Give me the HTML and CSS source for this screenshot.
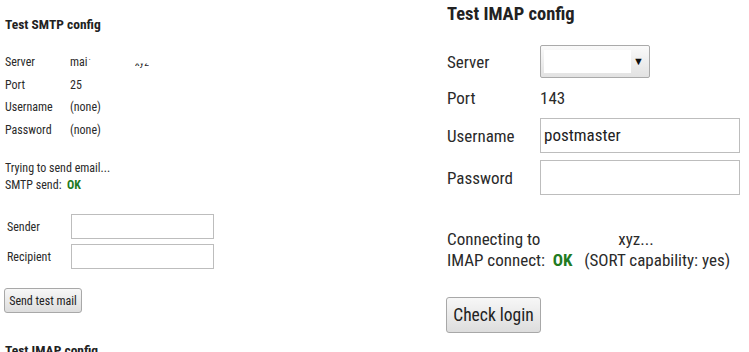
FILE: index.html
```html
<!DOCTYPE html>
<html>
<head>
<meta charset="utf-8">
<link rel="stylesheet" href="styles.css">
</head>
<body>
<div class="page">
  <section class="small">
    <h3 class="title">Test SMTP config</h3>
    <div class="info">
      <span class="lbl">Server</span><span class="val srv">mai<span class="tick">&#729;</span><span class="gap"></span><span class="tail">xyz</span></span>
      <span class="lbl">Port</span><span class="val">25</span>
      <span class="lbl">Username</span><span class="val">(none)</span>
      <span class="lbl">Password</span><span class="val">(none)</span>
    </div>
    <p class="status">Trying to send email...<br>SMTP send:&nbsp; <b class="ok">OK</b></p>
    <div class="form">
      <span class="lbl">Sender</span><div class="input"></div>
      <span class="lbl">Recipient</span><div class="input"></div>
    </div>
    <div class="btnrow"><button class="btn">Send test mail</button></div>
    <h3 class="title next">Test IMAP config</h3>
  </section>
  <section class="large">
    <h3 class="title">Test IMAP config</h3>
    <div class="info">
      <span class="lbl">Server</span><div class="select"><span class="selval"></span><span class="arrow">&#9660;</span></div>
      <span class="lbl">Port</span><span class="val">143</span>
      <span class="lbl">Username</span><div class="input">postmaster</div>
      <span class="lbl">Password</span><div class="input"></div>
    </div>
    <p class="status">Connecting to <span class="blank"></span>xyz...<br>IMAP connect:&nbsp; <b class="ok">OK</b>&nbsp;&nbsp; (SORT capability: yes)</p>
    <div class="btnrow"><button class="btn">Check login</button></div>
  </section>
</div>
</body>
</html>
```
FILE: styles.css
```css
html, body {
  margin: 0;
  padding: 0;
  background: #fff;
}
body {
  font-family: Roboto, "Liberation Sans", sans-serif;
  font-stretch: 75%;
  color: #2a2a2a;
  overflow: hidden;
  width: 749px;
  height: 352px;
}
.page {
  display: flex;
}
.small {
  width: 441px;
  padding-left: 5px;
  box-sizing: border-box;
  font-size: 12px;
}
.large {
  flex: 1;
  padding-left: 6px;
  font-size: 17px;
}
.title {
  margin: 0;
  font-weight: bold;
  color: #222;
}
.small .title {
  font-size: 13.5px;
  margin-top: 16px;
  line-height: 17px;
}
.small .title.next {
  margin-top: 29px;
}
.large .title {
  font-size: 18.5px;
  margin-top: 3px;
  line-height: 22px;
}
.info {
  display: grid;
  align-items: center;
}
.small .info {
  margin-top: 18px;
  grid-template-columns: 65px auto;
  grid-auto-rows: 22.5px;
}
.large .info {
  margin-top: 20px;
  grid-template-columns: 93px auto;
  grid-template-rows: 33px 26px 35px 35px;
  row-gap: 7px;
}
.srv {
  display: inline-flex;
  align-items: baseline;
}
.tick {
  font-size: 9px;
  margin-left: 1px;
}
.gap {
  display: inline-block;
  width: 44px;
}
.tail {
  font-size: 11px;
  clip-path: inset(55% 0 0 0);
}
.status {
  margin: 0;
}
.small .status {
  margin-top: 19px;
  line-height: 17px;
}
.large .status {
  margin-top: 34px;
  line-height: 21px;
}
.ok {
  color: #217a21;
}
.blank {
  display: inline-block;
  width: 74px;
}
.form {
  display: grid;
  grid-template-columns: 64px 143px;
  grid-auto-rows: 25px;
  row-gap: 5px;
  align-items: center;
  margin-top: 20px;
  padding-left: 2px;
}
.input {
  box-sizing: border-box;
  border: 1px solid #bdbdbd;
  background: #fff;
  color: #222;
  align-self: stretch;
}
.large .input {
  width: 200px;
  padding: 4px 3px;
  line-height: 25px;
}
.select {
  box-sizing: border-box;
  width: 110px;
  height: 33px;
  border: 1px solid #aaa;
  border-radius: 2px;
  background: linear-gradient(#fafafa, #e2e2e2);
  display: flex;
  align-items: center;
  padding: 4px 5px 4px 3px;
}
.selval {
  flex: 1;
  align-self: stretch;
  background: #fff;
}
.arrow {
  font-size: 11px;
  color: #111;
  margin-left: 2px;
}
.btn {
  font-family: inherit;
  font-stretch: 75%;
  color: #222;
  border: 1px solid #a8a8a8;
  border-radius: 3px;
  background: linear-gradient(#f7f7f7, #dddddd);
  display: block;
}
.small .btnrow {
  margin-top: 19px;
  margin-left: -1px;
}
.small .btn {
  font-size: 12px;
  height: 25px;
  width: 78px;
  padding: 0;
}
.large .btnrow {
  margin-top: 26px;
  margin-left: -1px;
}
.large .btn {
  font-size: 17.5px;
  height: 36px;
  width: 95px;
  padding: 0;
}
```
